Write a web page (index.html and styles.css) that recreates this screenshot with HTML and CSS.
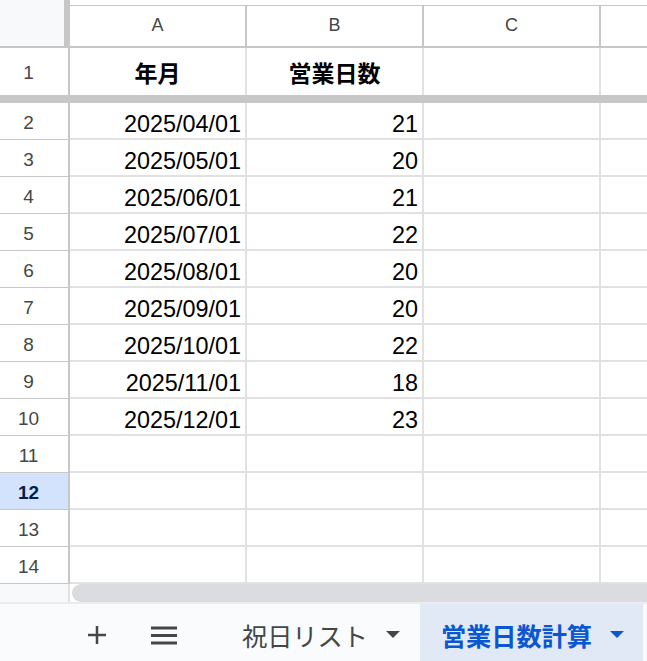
FILE: index.html
```html
<!DOCTYPE html>
<html lang="ja">
<head>
<meta charset="utf-8">
<title>営業日数計算</title>
<link rel="stylesheet" href="styles.css">
</head>
<body>
<div class="sheet">
  <div class="grid">
    <div class="corner"></div>
    <div class="colhead">A</div>
    <div class="colhead">B</div>
    <div class="colhead">C</div>
    <div class="colhead last"></div>

    <div class="rowhead first">1</div>
    <div class="cell head">年月</div>
    <div class="cell head">営業日数</div>
    <div class="cell head"></div>
    <div class="cell head last"></div>

    <div class="freeze"></div>

    <div class="rowhead">2</div><div class="cell">2025/04/01</div><div class="cell">21</div><div class="cell"></div><div class="cell last"></div>
    <div class="rowhead">3</div><div class="cell">2025/05/01</div><div class="cell">20</div><div class="cell"></div><div class="cell last"></div>
    <div class="rowhead">4</div><div class="cell">2025/06/01</div><div class="cell">21</div><div class="cell"></div><div class="cell last"></div>
    <div class="rowhead">5</div><div class="cell">2025/07/01</div><div class="cell">22</div><div class="cell"></div><div class="cell last"></div>
    <div class="rowhead">6</div><div class="cell">2025/08/01</div><div class="cell">20</div><div class="cell"></div><div class="cell last"></div>
    <div class="rowhead">7</div><div class="cell">2025/09/01</div><div class="cell">20</div><div class="cell"></div><div class="cell last"></div>
    <div class="rowhead">8</div><div class="cell">2025/10/01</div><div class="cell">22</div><div class="cell"></div><div class="cell last"></div>
    <div class="rowhead">9</div><div class="cell">2025/11/01</div><div class="cell">18</div><div class="cell"></div><div class="cell last"></div>
    <div class="rowhead">10</div><div class="cell">2025/12/01</div><div class="cell">23</div><div class="cell"></div><div class="cell last"></div>
    <div class="rowhead">11</div><div class="cell"></div><div class="cell"></div><div class="cell"></div><div class="cell last"></div>
    <div class="rowhead selected">12</div><div class="cell"></div><div class="cell"></div><div class="cell"></div><div class="cell last"></div>
    <div class="rowhead">13</div><div class="cell"></div><div class="cell"></div><div class="cell"></div><div class="cell last"></div>
    <div class="rowhead">14</div><div class="cell"></div><div class="cell"></div><div class="cell"></div><div class="cell last"></div>
  </div>

  <div class="hscroll">
    <div class="hs-left"></div>
    <div class="hs-thumb"></div>
  </div>
  <div class="divider"></div>

  <div class="tabbar">
    <div class="tool plus">
      <svg width="20" height="20" viewBox="0 0 20 20"><rect x="8.75" y="1" width="2.5" height="18" fill="#444746"/><rect x="1" y="8.75" width="18" height="2.5" fill="#444746"/></svg>
    </div>
    <div class="tool menu">
      <svg width="26" height="19" viewBox="0 0 26 19"><rect x="0" y="0.5" width="26" height="3" fill="#444746"/><rect x="0" y="8" width="26" height="3" fill="#444746"/><rect x="0" y="15.5" width="26" height="3" fill="#444746"/></svg>
    </div>
    <div class="tab holiday">
      <span class="tab-name">祝日リスト</span>
      <svg class="caret" width="14" height="7" viewBox="0 0 14 7"><polygon points="0,0 14,0 7,7" fill="#444746"/></svg>
    </div>
    <div class="tab active">
      <span class="tab-name">営業日数計算</span>
      <svg class="caret" width="14" height="7" viewBox="0 0 14 7"><polygon points="0,0 14,0 7,7" fill="#0b57d0"/></svg>
    </div>
  </div>
</div>
</body>
</html>
```
FILE: styles.css
```css
html, body {
  margin: 0;
  padding: 0;
  background: #ffffff;
}

.sheet {
  width: 647px;
  height: 661px;
  overflow: hidden;
  display: flex;
  flex-direction: column;
  font-family: "Liberation Sans", "Noto Sans CJK JP", sans-serif;
}

.grid {
  display: grid;
  grid-template-columns: 70px 177px 177px 177px 1fr;
  grid-template-rows: 48px 47px 8px repeat(13, 37px);
  box-sizing: border-box;
}

.corner {
  background: #f8f9fa;
  border-right: 6px solid #c7c7c7;
  border-bottom: 2px solid #c7c7c7;
  box-sizing: border-box;
}

.colhead {
  margin-top: 5px;
  border-top: 1px solid #c7c7c7;
  border-bottom: 2px solid #c7c7c7;
  border-right: 2px solid #c7c7c7;
  box-sizing: border-box;
  display: flex;
  align-items: center;
  justify-content: center;
  padding-bottom: 1px;
  font-size: 18px;
  color: #444746;
}

.colhead.last {
  border-right: none;
}

.rowhead {
  box-sizing: border-box;
  border-right: 2px solid #c7c7c7;
  border-bottom: 1px solid #c7c7c7;
  display: flex;
  align-items: center;
  justify-content: center;
  padding-right: 11px;
  padding-top: 4px;
  font-size: 19px;
  color: #444746;
}

.rowhead.first {
  border-bottom: none;
  padding-top: 2px;
}

.rowhead.selected {
  background: #d3e3fd;
  color: #041e49;
  font-weight: bold;
}

.cell {
  box-sizing: border-box;
  border-right: 2px solid #e1e1e1;
  border-bottom: 2px solid #e1e1e1;
  display: flex;
  align-items: flex-end;
  justify-content: flex-end;
  padding: 0 4px 0 0;
  font-size: 23.4px;
  color: #000000;
  white-space: nowrap;
}

.cell.last {
  border-right: none;
}

.cell.head {
  border-bottom: none;
  align-items: center;
  justify-content: center;
  padding: 1px 0 0 0;
  font-family: "Noto Sans CJK JP", sans-serif;
  font-weight: bold;
  font-size: 23px;
}

.freeze {
  grid-column: 1 / -1;
  background: #c7c7c7;
}

.hscroll {
  height: 18px;
  display: flex;
  flex: none;
}

.hs-left {
  width: 68px;
  background: #f8f9fa;
  border-right: 2px solid #e1e1e1;
  margin-right: 2px;
}

.hs-thumb {
  flex: 1;
  background: #dadce0;
  border-radius: 9px 0 0 9px;
}

.divider {
  height: 2px;
  background: #ececec;
  flex: none;
}

.tabbar {
  flex: 1;
  background: #f9fbfd;
  display: flex;
  align-items: stretch;
  padding-left: 79px;
}

.tool {
  width: 36px;
  display: flex;
  align-items: center;
  justify-content: center;
  padding-top: 5px;
}

.tool.menu {
  margin-left: 32px;
}

.tab {
  display: flex;
  align-items: center;
  padding: 4px 20px 0 20px;
  font-family: "Noto Sans CJK JP", sans-serif;
  font-size: 25.2px;
  color: #444746;
  white-space: nowrap;
}

.tab.holiday {
  margin-left: 40px;
}

.tab .caret {
  margin-left: 18px;
}

.tab.active {
  background: #e1e9f7;
  color: #0b57d0;
  font-weight: bold;
  padding-left: 21px;
  padding-right: 19px;
  flex: 1;
  margin-right: 4px;
}
```
